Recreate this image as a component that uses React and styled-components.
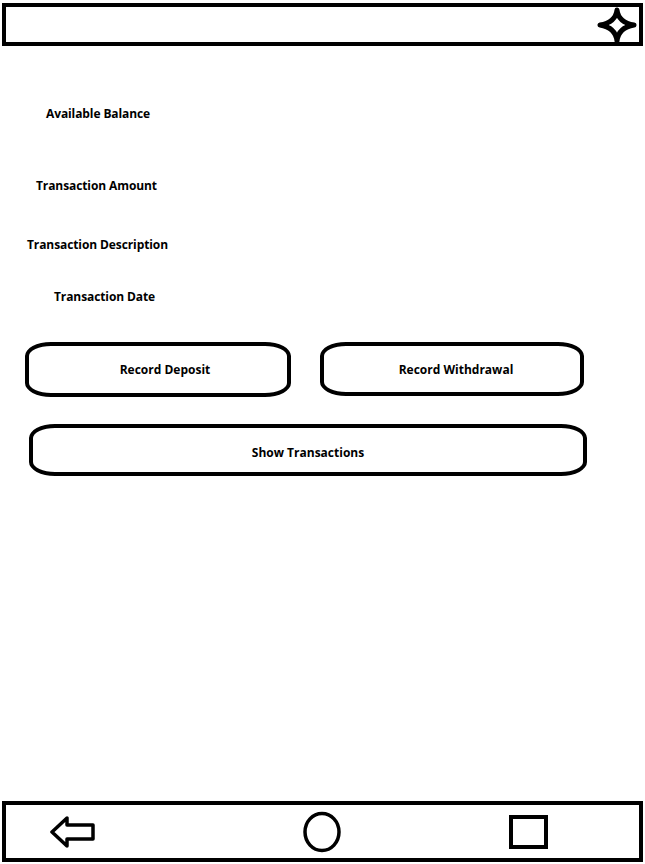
import React from "react";
import styled, { createGlobalStyle } from "styled-components";

const GlobalStyle = createGlobalStyle`
  html, body {
    margin: 0;
    padding: 0;
    background: #fff;
  }
  body {
    font-family: "Open Sans", "Liberation Sans", sans-serif;
    color: #000;
  }
`;

const Screen = styled.div`
  width: 645px;
  height: 864px;
  display: flex;
  flex-direction: column;
  box-sizing: border-box;
`;

const TopBar = styled.header`
  margin: 3px 2px 0;
  height: 43px;
  border: 4px solid #000;
  box-sizing: border-box;
  display: flex;
  align-items: center;
  justify-content: flex-end;
  padding-right: 2px;
`;

const Main = styled.main`
  flex: 1;
  display: flex;
  flex-direction: column;
  align-items: flex-start;
`;

const Label = styled.div`
  margin-top: ${(p) => p.$top}px;
  margin-left: ${(p) => p.$left}px;
  font-size: 12px;
  font-weight: 700;
  line-height: 16px;
  letter-spacing: -0.1px;
`;

const ButtonRow = styled.div`
  display: flex;
  align-items: flex-start;
  gap: 29px;
  margin-top: 37px;
  margin-left: 25px;
`;

const SketchButton = styled.button`
  flex: none;
  width: ${(p) => p.$width}px;
  height: ${(p) => p.$height}px;
  margin-top: ${(p) => p.$top || 0}px;
  margin-left: ${(p) => p.$left || 0}px;
  padding: ${(p) => p.$drop || 0}px 0 0 ${(p) => p.$nudge || 0}px;
  border: 4px solid #000;
  border-radius: 26px / 14px;
  background: #fff;
  font-family: "Open Sans", "Liberation Sans", sans-serif;
  font-size: 12px;
  font-weight: 700;
  color: #000;
  box-sizing: border-box;
  cursor: pointer;
`;

const BottomBar = styled.nav`
  margin: 0 2px 2px;
  height: 61px;
  border: 4px solid #000;
  box-sizing: border-box;
  display: flex;
  align-items: center;
`;

const NavItem = styled.div`
  margin-left: ${(p) => p.$left}px;
  display: flex;
  align-items: center;
`;

const StarIcon = () => (
  <svg width="40" height="36" viewBox="0 0 40 36">
    <path
      d="M20 3 Q21.5 15.5 37 18 Q21.5 20.5 20 34 Q18.5 20.5 3 18 Q18.5 15.5 20 3 Z"
      fill="#fff"
      stroke="#000"
      strokeWidth="5"
      strokeLinejoin="round"
    />
  </svg>
);

const BackIcon = () => (
  <svg width="46" height="32" viewBox="0 0 46 32">
    <path
      d="M2 16 L17 2 L17 9 L43 9 L43 23 L17 23 L17 30 Z"
      fill="#fff"
      stroke="#000"
      strokeWidth="3.5"
      strokeLinejoin="round"
    />
  </svg>
);

const HomeIcon = () => (
  <svg width="40" height="42" viewBox="0 0 40 42">
    <ellipse cx="20" cy="21" rx="17" ry="18.5" fill="none" stroke="#000" strokeWidth="3.5" />
  </svg>
);

const RecentIcon = () => (
  <svg width="40" height="34" viewBox="0 0 40 34">
    <rect x="2" y="2" width="35" height="30" fill="none" stroke="#000" strokeWidth="4" />
  </svg>
);

export default function App() {
  return (
    <>
      <GlobalStyle />
      <Screen>
        <TopBar>
          <StarIcon />
        </TopBar>
        <Main>
          <Label $top={60} $left={46}>Available Balance</Label>
          <Label $top={56} $left={36}>Transaction Amount</Label>
          <Label $top={43} $left={27}>Transaction Description</Label>
          <Label $top={36} $left={54}>Transaction Date</Label>
          <ButtonRow>
            <SketchButton $width={266} $height={55} $nudge={14}>
              Record Deposit
            </SketchButton>
            <SketchButton $width={264} $height={54} $nudge={8}>
              Record Withdrawal
            </SketchButton>
          </ButtonRow>
          <SketchButton $width={558} $height={52} $top={27} $left={29} $drop={4}>
            Show Transactions
          </SketchButton>
        </Main>
        <BottomBar>
          <NavItem $left={44}>
            <BackIcon />
          </NavItem>
          <NavItem $left={206}>
            <HomeIcon />
          </NavItem>
          <NavItem $left={167}>
            <RecentIcon />
          </NavItem>
        </BottomBar>
      </Screen>
    </>
  );
}
